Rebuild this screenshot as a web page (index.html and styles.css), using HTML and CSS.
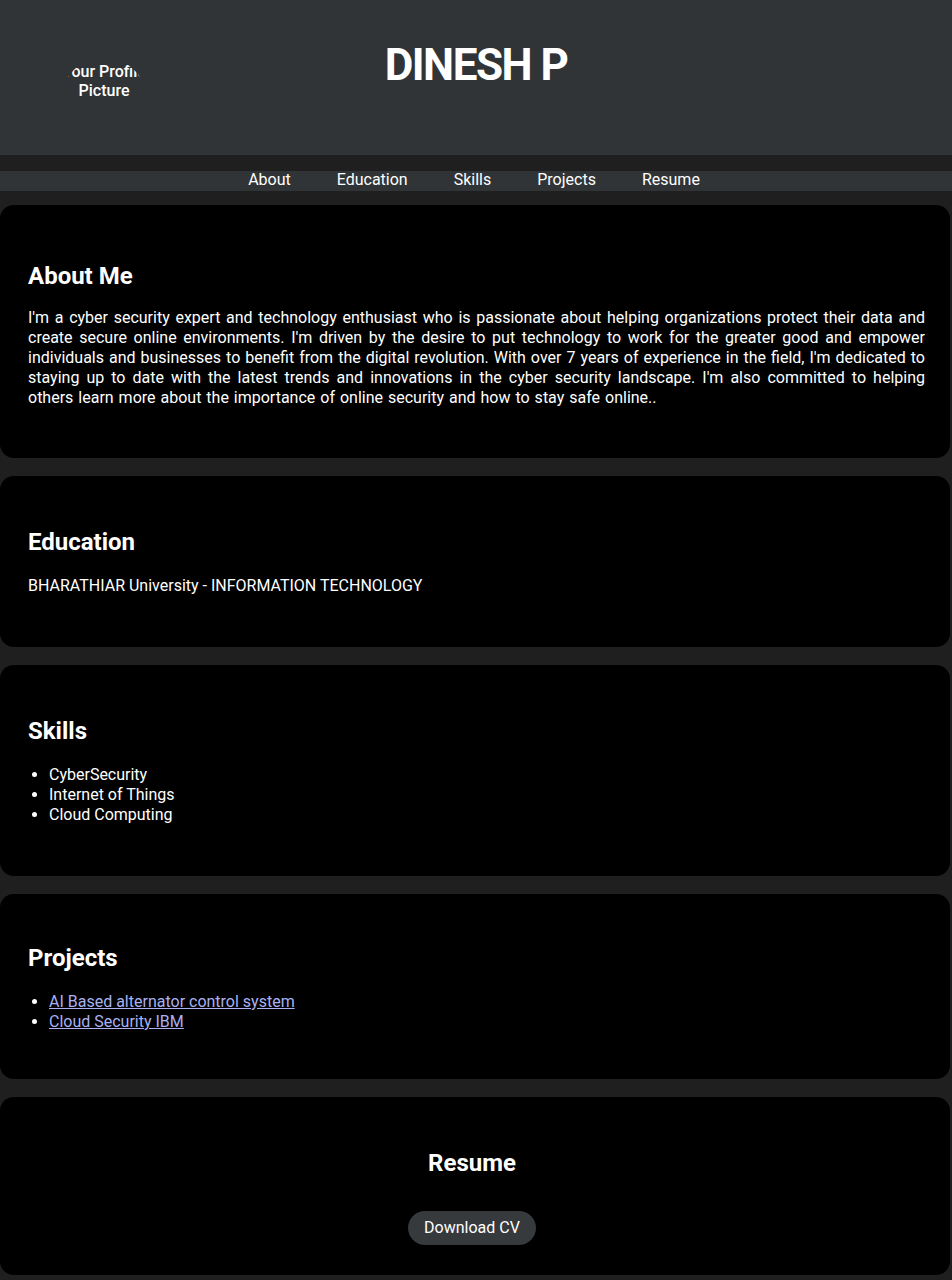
FILE: index.html
```html
<!DOCTYPE html>
<html lang="en">
<head>
<meta charset="utf-8">
<title>DINESH P</title>
<link rel="stylesheet" href="styles.css">
</head>
<body>
<header class="site-header">
  <div class="profile-pic"><span class="profile-alt">Your Profile Picture</span></div>
  <h1 class="site-title">DINESH P</h1>
  <div class="spacer"></div>
</header>
<nav class="site-nav">
  <a href="#about">About</a>
  <a href="#education">Education</a>
  <a href="#skills">Skills</a>
  <a href="#projects">Projects</a>
  <a href="#resume">Resume</a>
</nav>
<main class="content">
  <section class="card card-about" id="about">
    <h2>About Me</h2>
    <p class="about-text">I'm a cyber security expert and technology enthusiast who is passionate about helping organizations protect their data and create secure online environments. I'm driven by the desire to put technology to work for the greater good and empower individuals and businesses to benefit from the digital revolution. With over 7 years of experience in the field, I'm dedicated to staying up to date with the latest trends and innovations in the cyber security landscape. I'm also committed to helping others learn more about the importance of online security and how to stay safe online..</p>
  </section>
  <section class="card" id="education">
    <h2>Education</h2>
    <p>BHARATHIAR University - INFORMATION TECHNOLOGY</p>
  </section>
  <section class="card" id="skills">
    <h2>Skills</h2>
    <ul>
      <li>CyberSecurity</li>
      <li>Internet of Things</li>
      <li>Cloud Computing</li>
    </ul>
  </section>
  <section class="card card-projects" id="projects">
    <h2>Projects</h2>
    <ul>
      <li><a href="#">AI Based alternator control system</a></li>
      <li><a href="#">Cloud Security IBM</a></li>
    </ul>
  </section>
  <section class="card card-resume" id="resume">
    <h2>Resume</h2>
    <a class="btn" href="#">Download CV</a>
  </section>
</main>
</body>
</html>
```
FILE: styles.css
```css
* { box-sizing: border-box; }
html, body { margin: 0; padding: 0; }
body {
  background: #1f1f1f;
  color: #fff;
  font-family: Roboto, "Liberation Sans", sans-serif;
  font-size: 16px;
  line-height: 20px;
}
.site-header {
  background: #303437;
  height: 155px;
  display: grid;
  grid-template-columns: 1fr auto 1fr;
  align-items: start;
}
.profile-pic {
  justify-self: start;
  margin: 58px 0 0 60px;
  width: 88px;
  height: 88px;
  border-radius: 50%;
  overflow: hidden;
  display: flex;
  justify-content: center;
}
.profile-alt {
  display: block;
  flex: none;
  width: 96px;
  padding-top: 4px;
  text-align: center;
  font-size: 16px;
  line-height: 19px;
  font-weight: 500;
}
.site-title {
  margin: 40px 0 0;
  font-size: 44px;
  line-height: 50px;
  font-weight: 700;
  letter-spacing: -1.5px;
}
.site-nav {
  margin-top: 16px;
  background: #303437;
  height: 20px;
  display: flex;
  justify-content: center;
  gap: 46px;
  padding-right: 4px;
}
.site-nav a {
  color: #fff;
  text-decoration: none;
  font-size: 16px;
  line-height: 20px;
  position: relative;
  top: -1px;
}
.content {
  padding-top: 14px;
  padding-right: 2px;
  display: flex;
  flex-direction: column;
  gap: 18px;
}
.card {
  background: #000;
  border-radius: 14px;
  padding: 52px 25px 51px 28px;
}
.card h2 {
  margin: 0 0 20px;
  font-size: 24px;
  line-height: 28px;
  font-weight: 700;
}
.card p { margin: 0; }
.about-text { text-align: justify; word-spacing: 1px; }
.card-about { padding-top: 57px; padding-bottom: 50px; }
.card-about h2 { margin-bottom: 18px; }
.card-projects { padding-top: 50px; padding-bottom: 47px; }
.card ul {
  margin: 0;
  padding-left: 21px;
}
.card ul a { color: #a9b2f0; }
.card-resume {
  display: flex;
  flex-direction: column;
  align-items: center;
  padding-bottom: 30px;
  padding-right: 34px;
}
.card-resume h2 { margin-bottom: 34px; }
.btn {
  display: inline-block;
  background: #373a3d;
  color: #fff;
  text-decoration: none;
  padding: 7px 16px;
  border-radius: 17px;
  line-height: 20px;
}
```
